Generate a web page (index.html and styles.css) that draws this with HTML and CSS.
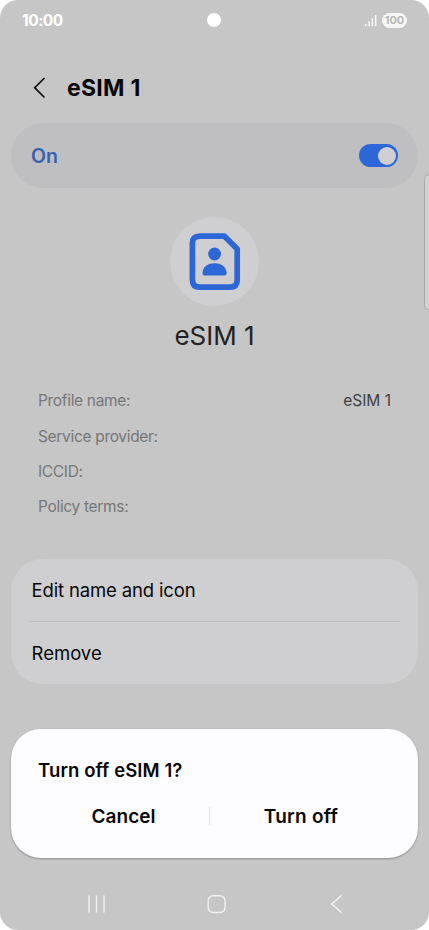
FILE: index.html
```html
<!DOCTYPE html>
<html lang="en">
<head>
<meta charset="utf-8">
<title>eSIM 1</title>
<link rel="stylesheet" href="styles.css">
</head>
<body>
<div class="phone">
  <div class="status">
    <span class="clock">10:00</span>
    <span class="camera"></span>
    <span class="indicators">
      <svg class="signal" width="13" height="13" viewBox="0 0 13 13"><path d="M.8 10v2.300M4.100 7.300v5M7.400 4.200v8.100M10.700 1v11.300" stroke="#f8f8f8" stroke-width="1.500"/></svg>
      <span class="battery">100</span>
    </span>
  </div>
  <header class="header">
    <svg width="14" height="24" viewBox="0 0 14 24"><path d="M11.500 2 1.700 11.700 11.500 21.500" fill="none" stroke="#101010" stroke-width="1.700"/></svg>
    <h1 class="title">eSIM 1</h1>
  </header>
  <section class="switch-card">
    <span class="on">On</span>
    <span class="toggle"><span class="knob"></span></span>
  </section>
  <div class="avatar">
    <svg width="52" height="58" viewBox="0 0 52 58"><path d="M11 3.200H35.500L48.200 16V47Q48.200 54.200 41 54.200H11Q3.400 54.200 3.400 47V10.500Q3.400 3.200 11 3.200Z" fill="none" stroke="#2d66d6" stroke-width="5.700" stroke-linejoin="round"/><circle cx="25.600" cy="21" r="6.400" fill="#2d66d6"/><path d="M13.500 40.500C13.500 33.500 19 30.300 25.600 30.300S37.600 33.500 37.600 40.500Q37.600 42.500 35.600 42.500H15.500Q13.500 42.500 13.500 40.500Z" fill="#2d66d6"/></svg>
  </div>
  <div class="name">eSIM 1</div>
  <div class="details">
    <div class="detail"><span>Profile name:</span><span class="value">eSIM 1</span></div>
    <div class="detail"><span>Service provider:</span></div>
    <div class="detail"><span>ICCID:</span></div>
    <div class="detail"><span>Policy terms:</span></div>
  </div>
  <section class="options">
    <div class="option edit">Edit name and icon</div>
    <div class="line"></div>
    <div class="option">Remove</div>
  </section>
  <section class="dialog">
    <h2 class="question">Turn off eSIM 1?</h2>
    <div class="actions">
      <span class="action">Cancel</span>
      <span class="separator"></span>
      <span class="action turn">Turn off</span>
    </div>
  </section>
  <nav class="nav">
    <svg width="20" height="20" viewBox="0 0 20 20"><path d="M3 1.500v17M10.500 1.500v17M18 1.500v17" stroke="#f1f1f1" stroke-width="1.400"/></svg>
    <svg width="20" height="20" viewBox="0 0 20 20"><rect x="1.200" y="1.700" width="16.800" height="16.800" rx="5" fill="none" stroke="#f1f1f1" stroke-width="1.400"/></svg>
    <svg width="20" height="20" viewBox="0 0 20 20"><path d="M14.500 1.500 4.800 10 14.500 18.500" fill="none" stroke="#f1f1f1" stroke-width="1.400"/></svg>
  </nav>
  <div class="edge-panel"></div>
</div>
</body>
</html>
```
FILE: styles.css
```css
* { box-sizing: border-box; }
body { margin: 0; background: #fff; font-family: Inter, Roboto, sans-serif; }
svg { display: block; }
h1, h2 { margin: 0; }
.phone {
  position: relative;
  width: 429px;
  height: 930px;
  overflow: hidden;
  border-radius: 18px;
  background: #c6c6c6;
  color: #080808;
  white-space: nowrap;
}
.status {
  display: grid;
  grid-template-columns: 1fr 14px 1fr;
  align-items: center;
  height: 40px;
  padding: 0 22px;
}
.clock { color: #fff; font-size: 15.5px; font-weight: 700; letter-spacing: -0.5px; }
.camera { width: 14px; height: 14px; margin-left: -0.5px; border-radius: 50%; background: #fff; }
.indicators { display: flex; justify-content: flex-end; align-items: center; gap: 4px; }
.battery {
  width: 25px;
  height: 15px;
  border-radius: 8px;
  background: #f6f6f6;
  color: #b9b9b9;
  font-size: 11px;
  font-weight: 700;
  line-height: 15px;
  text-align: center;
}
.header { display: flex; align-items: center; gap: 20px; height: 83px; padding: 12px 0 0 33px; }
.title { font-size: 23px; font-weight: 700; line-height: 28px; letter-spacing: 0.3px; }
.switch-card {
  display: flex;
  justify-content: space-between;
  align-items: center;
  height: 65px;
  margin: 0 11px;
  padding: 0 20px;
  border-radius: 32px;
  background: #bfbfc1;
}
.on { padding-top: 1px; color: #3760b1; font-size: 19.5px; font-weight: 600; }
.toggle {
  display: flex;
  justify-content: flex-end;
  align-items: center;
  width: 39px;
  height: 23px;
  padding-right: 2px;
  border-radius: 12px;
  background: #2d66d6;
}
.knob { width: 18px; height: 18px; border-radius: 50%; background: #d0d0d3; }
.avatar {
  display: flex;
  align-items: center;
  justify-content: center;
  width: 89px;
  height: 89px;
  margin: 29px 0 1px 170px;
  border-radius: 50%;
  background: #cfcfd1;
}
.name { height: 76px; padding-top: 13px; color: #222; font-size: 26px; line-height: 32px; text-align: center; }
.details { height: 176px; padding: 0 38px; color: #777; font-size: 15.5px; letter-spacing: -0.32px; }
.detail { display: flex; justify-content: space-between; align-items: center; height: 35.4px; }
.value { color: #424242; letter-spacing: 0; }
.options { height: 125px; margin: 0 11px; border-radius: 32px; background: #cfcfd1; }
.option { display: flex; align-items: center; height: 62px; padding: 0 20px 0 20.5px; font-size: 18.5px; }
.edit { letter-spacing: -0.15px; }
.line { height: 1px; margin: 0 18px; background: #bcbcbe; }
.dialog {
  height: 129px;
  margin: 45px 11px 0;
  padding-top: 28px;
  border-radius: 30px;
  background: #fdfdff;
  box-shadow: 0 1px 2px rgba(0, 0, 0, .3);
}
.question { padding-left: 27px; font-size: 18.5px; font-weight: 600; line-height: 26px; letter-spacing: 0.1px; }
.actions { display: grid; grid-template-columns: 171px 1px 181px; align-items: center; height: 66px; margin-left: 27px; font-size: 19px; font-weight: 600; }
.action { text-align: center; }
.turn { padding-left: 1px; letter-spacing: 0.25px; }
.separator { height: 18px; background: #e5e5e8; }
.nav { display: flex; justify-content: space-between; height: 71px; padding: 36px 82px 0 86px; }
.edge-panel {
  position: absolute;
  top: 174px;
  right: -4px;
  width: 9px;
  height: 136px;
  border: 1px solid #aaaaac;
  border-radius: 5px;
  background: #d2d2d3;
}
```
